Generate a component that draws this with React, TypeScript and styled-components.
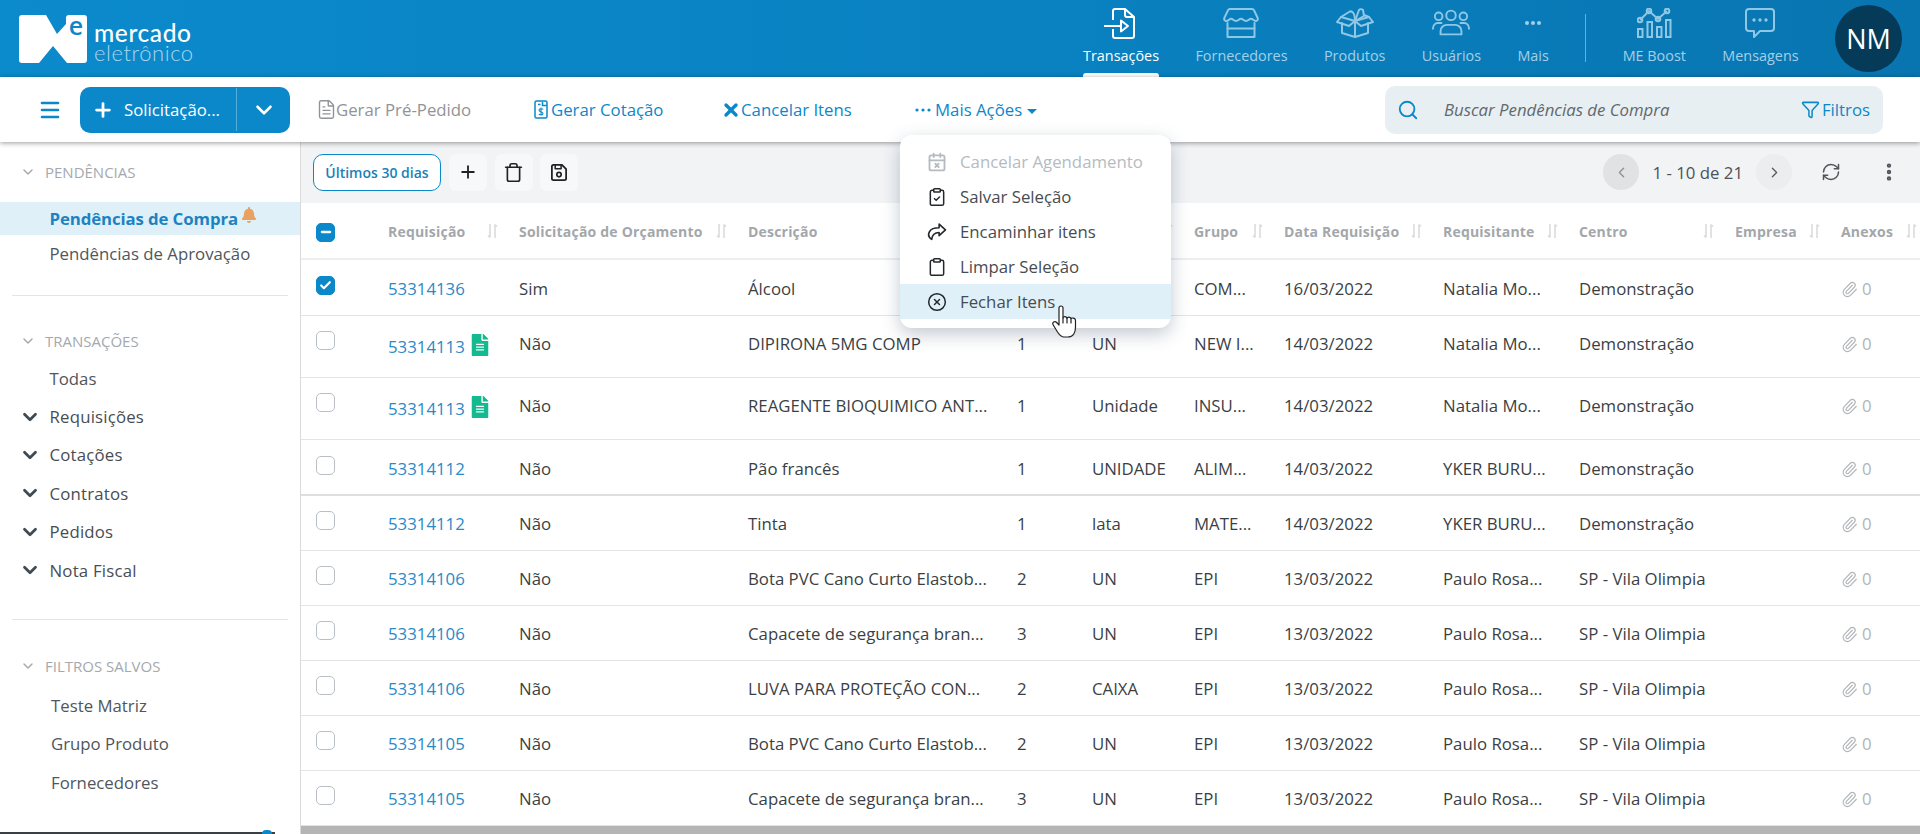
import React from "react";
import styled, { createGlobalStyle } from "styled-components";
import {
  Search, Funnel, Trash, Plus, RefreshCw, EllipsisVertical, ChevronDown, ChevronLeft, ChevronRight,
  Menu as MenuIcon, CalendarX, ClipboardCheck, Clipboard, CircleX, Paperclip, FileText, X, Check, Minus,
} from "lucide-react";
import { FaBell, FaFileAlt } from "react-icons/fa";

const BLUE = "#0b88c9";
const TEXT = "16.8px";

const Global = createGlobalStyle`
  html, body { margin: 0; padding: 0; height: 100%; overflow: hidden; background: #fff; }
  body { font-family: "Open Sans", "Noto Sans", sans-serif; font-size: ${TEXT}; color: #3c4247; }
  * { box-sizing: border-box; }
`;

const Page = styled.div`
  position: relative;
  width: 1920px;
  height: 834px;
  display: flex;
  flex-direction: column;
  overflow: hidden;
`;

const Header = styled.header`
  height: 77px;
  flex: none;
  display: flex;
  align-items: stretch;
  justify-content: space-between;
  padding: 0 18px 0 19px;
  background: linear-gradient(90deg, #0b8acc 0%, #0a82c2 50%, #0875b0 100%);
`;

const Logo = styled.div`
  display: flex;
  align-items: center;
  gap: 7px;
  svg { overflow: visible; }
`;

const LogoText = styled.div`
  display: flex;
  flex-direction: column;
  padding-top: 7px;
  font-family: "Lato", "Open Sans", sans-serif;
`;

const LogoTop = styled.span`
  font-size: 24.5px;
  line-height: 21px;
  font-weight: 500;
  letter-spacing: 0.6px;
  color: #fff;
`;

const LogoBottom = styled.span`
  font-size: 22px;
  line-height: 20px;
  font-weight: 300;
  letter-spacing: 0.55px;
  color: #a9d6ef;
`;

const Nav = styled.nav`
  display: flex;
  align-items: stretch;
  gap: 36.4px;
`;

const NavItem = styled.div<{ $active?: boolean }>`
  position: relative;
  display: flex;
  flex-direction: column;
  align-items: center;
  padding-top: 8px;
  font-size: 14.4px;
  line-height: 20px;
  font-weight: 500;
  color: ${(p) => (p.$active ? "#fff" : "#a2d0e9")};
  svg { display: block; }
`;

const NavIconBox = styled.div`
  height: 30px;
  margin-bottom: 8px;
  display: flex;
  align-items: center;
  justify-content: center;
`;

const NavMark = styled.span`
  position: absolute;
  left: 0;
  right: 0;
  bottom: 0;
  height: 4px;
  border-radius: 3px 3px 0 0;
  background: #fff;
`;

const NavDivider = styled.div`
  width: 1px;
  height: 48px;
  margin-top: 14px;
  background: rgba(255, 255, 255, 0.4);
`;

const Avatar = styled.div`
  width: 67px;
  height: 67px;
  margin-top: 5px;
  border-radius: 50%;
  background: #053b58;
  color: #fff;
  display: flex;
  align-items: center;
  justify-content: center;
  font-size: 27px;
`;

const Toolbar = styled.div`
  position: relative;
  z-index: 2;
  height: 65px;
  flex: none;
  display: flex;
  align-items: center;
  padding: 0 37px 0 40px;
  background: #fff;
  box-shadow: 0 1px 5px rgba(0, 0, 0, 0.4);
`;

const Burger = styled.div`
  width: 20px;
  margin-right: 20px;
  display: flex;
  color: ${BLUE};
  svg { margin: 0 -2px; }
`;

const SplitButton = styled.div`
  width: 210px;
  height: 46px;
  margin-right: 29px;
  border-radius: 10px;
  background: ${BLUE};
  color: #fff;
  display: flex;
  align-items: center;
  font-weight: 500;
`;

const SplitMain = styled.div`
  flex: 1;
  display: flex;
  align-items: center;
  gap: 10px;
  padding-left: 12px;
  height: 43px;
  border-right: 1px solid rgba(255, 255, 255, 0.3);
`;

const SplitCaret = styled.div`
  width: 53px;
  display: flex;
  justify-content: center;
`;

const Actions = styled.div`
  display: grid;
  grid-template-columns: 215px 191px 190px auto;
  align-items: center;
`;

const Action = styled.div<{ $disabled?: boolean; $gap?: number }>`
  display: flex;
  align-items: center;
  gap: ${(p) => p.$gap ?? 4}px;
  color: ${(p) => (p.$disabled ? "#8f9498" : BLUE)};
`;

const TrimIcon = styled.span<{ $trim: number }>`
  display: flex;
  margin: 0 ${(p) => -p.$trim}px;
`;

const CaretDown = styled.span`
  width: 0;
  height: 0;
  margin-left: 1px;
  margin-top: 3px;
  border-left: 5px solid transparent;
  border-right: 5px solid transparent;
  border-top: 5px solid ${BLUE};
`;

const SearchBox = styled.div`
  margin-left: auto;
  width: 498px;
  height: 48px;
  display: flex;
  align-items: center;
  padding: 0 13px 0 12px;
  border-radius: 10px;
  background: #e8eff3;
  color: ${BLUE};
`;

const SearchText = styled.span`
  flex: 1;
  margin-left: 25px;
  font-style: italic;
  color: #62686d;
`;

const Filters = styled.span`
  display: flex;
  align-items: center;
  gap: 2px;
`;

const Main = styled.main`
  flex: 1;
  min-height: 0;
  display: flex;
`;

const Sidebar = styled.aside`
  position: relative;
  width: 301px;
  flex: none;
  padding-top: 12px;
  border-right: 1px solid #d8dadc;
  background: #fff;
`;

const SectionHead = styled.div`
  height: 36px;
  display: flex;
  align-items: center;
  gap: 9px;
  padding-left: 20px;
  font-size: 15px;
  color: #a5a9ad;
`;

const SideGap = styled.div<{ $h: number }>`
  height: ${(p) => p.$h}px;
`;

const SideActive = styled.div`
  height: 33px;
  display: flex;
  align-items: center;
  padding-left: 49.5px;
  background: #e0f0f8;
  color: #1b83c1;
  font-weight: 700;
  letter-spacing: -0.1px;
`;

const BellMark = styled.span`
  display: flex;
  margin: -7px 0 0 3px;
  color: #e8a15f;
`;

const SideItem = styled.div<{ $h?: number; $x?: number; $strong?: boolean }>`
  height: ${(p) => p.$h ?? 38.4}px;
  display: flex;
  align-items: center;
  gap: 9px;
  padding-left: ${(p) => p.$x ?? 49.5}px;
  font-weight: ${(p) => (p.$strong ? 500 : 400)};
  letter-spacing: ${(p) => (p.$strong ? "0.2px" : "0")};
  color: ${(p) => (p.$strong ? "#474d52" : "#50565b")};
`;

const SideToggle = styled.span`
  display: flex;
  margin-left: -31px;
  width: 22px;
  color: #3f4a52;
`;

const SideDivider = styled.div`
  height: 1px;
  margin: 0 12px;
  background: #e3e5e7;
`;

const SideEdge = styled.div`
  position: absolute;
  left: 0;
  bottom: 0;
  width: 275px;
  height: 2px;
  background: #3a3f44;
  &::after {
    content: "";
    position: absolute;
    right: 3px;
    top: -2px;
    width: 10px;
    height: 4px;
    border-radius: 5px 5px 0 0;
    background: ${BLUE};
  }
`;

const Content = styled.section`
  flex: 1;
  min-width: 0;
  display: flex;
  flex-direction: column;
`;

const ContentBar = styled.div`
  height: 61px;
  flex: none;
  display: flex;
  align-items: center;
  padding: 0 20px 1px 12px;
  background: #f1f3f5;
`;

const PeriodChip = styled.div`
  width: 128px;
  height: 37px;
  margin-right: 8px;
  display: flex;
  align-items: center;
  justify-content: center;
  border: 1px solid ${BLUE};
  border-radius: 10px;
  background: #fff;
  color: #1b7fb9;
  font-size: 14px;
  font-weight: 600;
`;

const IconChip = styled.div`
  width: 38px;
  height: 37px;
  margin-right: 7.5px;
  display: flex;
  align-items: center;
  justify-content: center;
  border-radius: 6px;
  background: #f7f8f9;
  color: #1f2326;
`;

const Pager = styled.div`
  margin-left: auto;
  display: flex;
  align-items: center;
  color: #4c5257;
`;

const PageCircle = styled.div<{ $dim?: boolean }>`
  width: 36px;
  height: 36px;
  border-radius: 50%;
  display: flex;
  align-items: center;
  justify-content: center;
  background: ${(p) => (p.$dim ? "#e1e2e3" : "#ebedee")};
  color: ${(p) => (p.$dim ? "#8b8f93" : "#555a5f")};
`;

const PageText = styled.span`
  margin: 0 13px;
`;

const PagerIcon = styled.span<{ $gap: number }>`
  display: flex;
  margin-left: ${(p) => p.$gap}px;
  color: #50565b;
`;

const HeadRow = styled.div`
  height: 57px;
  flex: none;
  display: grid;
  grid-template-columns: 72px 131px 229px 269px 75px 102px 90px 159px 136px 156px 106px 79px;
  padding-left: 15px;
  align-items: center;
  background: #fff;
  border-bottom: 2px solid #eceef1;
`;

const HeadCheck = styled.div`
  margin-top: 3px;
`;

const HeadCell = styled.div<{ $end?: number }>`
  display: flex;
  align-items: center;
  justify-content: space-between;
  padding-right: ${(p) => p.$end ?? 21}px;
  padding-top: 1px;
  font-size: 14px;
  font-weight: 700;
  letter-spacing: 0.2px;
  color: #a3a7ab;
  white-space: nowrap;
`;

const BodyRow = styled.div<{ $h: number; $heavy?: boolean; $top?: number }>`
  height: ${(p) => p.$h}px;
  flex: none;
  display: grid;
  grid-template-columns: 72px 131px 229px 269px 75px 102px 90px 159px 136px 156px 106px 79px;
  align-items: start;
  padding-left: 15px;
  padding-top: ${(p) => p.$top ?? 18}px;
  background: #fff;
  border-bottom: ${(p) => (p.$heavy ? "2px solid #dcdee0" : "1.5px solid #e2e4e6")};
  line-height: 22px;
  color: #3a3f44;
`;

const Cell = styled.div`
  white-space: nowrap;
`;

const CheckCell = styled.div`
  margin-top: -2px;
`;

const LinkCell = styled.div<{ $drop?: boolean }>`
  display: flex;
  align-items: flex-start;
  gap: 4px;
  color: #2a8ac8;
  white-space: nowrap;
  padding-top: ${(p) => (p.$drop ? 3 : 0)}px;
`;

const FileMark = styled.span`
  display: flex;
  margin-top: -2px;
  color: #13b98f;
`;

const AttachCell = styled.div`
  display: flex;
  align-items: center;
  gap: 4px;
  color: #b1b5b9;
`;

const Box = styled.span<{ $on?: boolean }>`
  width: 19px;
  height: 19px;
  display: flex;
  align-items: center;
  justify-content: center;
  border-radius: 5px;
  border: 1.5px solid ${(p) => (p.$on ? BLUE : "#b9bfc5")};
  background: ${(p) => (p.$on ? BLUE : "#fff")};
  color: #fff;
`;

const Scrollbar = styled.div`
  flex: 1;
  background: #b5b5b5;
`;

const Dropdown = styled.div`
  position: absolute;
  left: 900px;
  top: 135px;
  z-index: 5;
  width: 271px;
  padding: 9px 0;
  border-radius: 12px;
  background: #fff;
  box-shadow: 0 6px 18px rgba(40, 60, 90, 0.28);
`;

const DropItem = styled.div<{ $disabled?: boolean; $hover?: boolean }>`
  height: 35px;
  display: flex;
  align-items: center;
  gap: 13px;
  padding-left: 27px;
  color: ${(p) => (p.$disabled ? "#b5bbc1" : "#474c51")};
  background: ${(p) => (p.$hover ? "#e0f0f8" : "transparent")};
  svg { flex: none; color: ${(p) => (p.$disabled ? "#b5bbc1" : "#24282b")}; }
`;

const Hand = styled.div`
  position: absolute;
  left: 1052px;
  top: 305px;
  z-index: 6;
  display: flex;
`;

const TransacoesIconShift = styled.span`
  display: flex;
  margin-left: -4px;
`;

const IconHand = () => (
  <svg width="26" height="33" viewBox="0 0 26 33" fill="#fff" stroke="#222" strokeWidth="1.200" strokeLinejoin="round" strokeLinecap="round">
    <path d="M7 3c0-2.700 4-2.700 4 0v10c0-2 4-2 4 .5 0-2 4-2 4 .5 0-1.500 4.500-1.500 4.500 1.500v6.500c0 5-2 10-7.500 10H12c-3 0-4.500-2-6.500-5L1.200 20c-1.500-2.500 1.500-4.500 3.500-2.500L7 20z" />
    <path d="M11 13v5M15 13.500V18M19 14.500V18" fill="none" />
  </svg>
);

const IconTransacoes = () => (
  <TransacoesIconShift>
    <svg width="32" height="32" viewBox="0 0 32 32" fill="none" stroke="#fff" strokeWidth="2" strokeLinejoin="round">
      <path d="M10 13V4a2 2 0 0 1 2-2h10l9 8v19a2 2 0 0 1-2 2H12a2 2 0 0 1-2-2v-7" />
      <path d="M22 2v6a2 2 0 0 0 2 2h7" />
      <path d="M1 19h17" />
      <path d="M18 13.500l7 5.500-7 5.500z" />
    </svg>
  </TransacoesIconShift>
);

const IconStore = () => (
  <svg width="36" height="30" viewBox="0 0 36 30" fill="none" stroke="#8fc7e4" strokeWidth="2" strokeLinejoin="round" strokeLinecap="round">
    <path d="M7 1h22c1 0 1.600.5 2 1.300l3.600 7.500c.8 1.800-.3 3.200-1.800 3.200" />
    <path d="M7 1C6 1 5.400 1.500 5 2.300L1.400 9.800C.6 11.600 1.700 13 3.200 13" />
    <path d="M3 13c3 0 3-2.300 5-2.300S10.500 13 13 13s3-2.300 5-2.300S20.500 13 23 13s3-2.300 5-2.300 2.500 2.300 5 2.300" />
    <path d="M4.500 15v14h27V15" />
    <path d="M4.500 20.500h27" />
  </svg>
);

const IconGift = () => (
  <svg width="38" height="30" viewBox="0 0 38 30" fill="none" stroke="#8fc7e4" strokeWidth="2" strokeLinejoin="round" strokeLinecap="round">
    <path d="M6 15v10l13 4 13-4V15" />
    <path d="M19 14v15" />
    <path d="M5 9L1 14l12 4 6-5 6 5 12-4-4-5-14 4z" />
    <path d="M5 9l8-5c3-2 6 1 6 9" />
    <path d="M33 9l-5-2" />
    <path d="M19 13l4-11c1-1 3-1 4 0l1 6z" />
  </svg>
);

const IconUsers = () => (
  <svg width="38" height="28" viewBox="0 0 40 28" fill="none" stroke="#8fc7e4" strokeWidth="2" strokeLinecap="round" strokeLinejoin="round">
    <circle cx="7" cy="7" r="4" />
    <circle cx="20" cy="6" r="5" />
    <circle cx="33" cy="7" r="4" />
    <path d="M9 26v-3.500a6.500 6.500 0 0 1 6.500-6.500h9a6.500 6.500 0 0 1 6.500 6.500V26z" />
    <path d="M1 20c0-3 2-6 5-6h4" />
    <path d="M39 20c0-3-2-6-5-6h-4" />
  </svg>
);

const IconDots = () => (
  <svg width="18" height="6" viewBox="0 0 18 6" fill="#a2d0e9">
    <circle cx="3" cy="3" r="2" />
    <circle cx="9" cy="3" r="2" />
    <circle cx="15" cy="3" r="2" />
  </svg>
);

const IconBoost = () => (
  <svg width="35" height="30" viewBox="0 0 35 30" fill="none" stroke="#8fc7e4" strokeWidth="2">
    <path d="M3 12l9-9 9 8 9-8" />
    <circle cx="3" cy="12" r="2.300" />
    <circle cx="12" cy="3" r="2.300" />
    <circle cx="21" cy="11" r="2.300" />
    <circle cx="30" cy="3" r="2.300" />
    <rect x="1" y="21" width="4.500" height="8" />
    <rect x="10.500" y="14" width="4.500" height="15" />
    <rect x="20" y="19" width="4.500" height="10" />
    <rect x="29" y="12" width="4.500" height="17" />
  </svg>
);

const IconMessage = () => (
  <svg width="30" height="30" viewBox="0 0 30 30" fill="none" stroke="#8fc7e4" strokeWidth="2" strokeLinejoin="round">
    <path d="M4 1h22a3 3 0 0 1 3 3v16a3 3 0 0 1-3 3H15l-6 6v-6H4a3 3 0 0 1-3-3V4a3 3 0 0 1 3-3z" />
    <g fill="#8fc7e4" stroke="none">
      <circle cx="9" cy="12" r="1.700" />
      <circle cx="15" cy="12" r="1.700" />
      <circle cx="21" cy="12" r="1.700" />
    </g>
  </svg>
);

const IconLogoMark = () => (
  <svg width="68" height="48" viewBox="0 0 68 48">
    <path
      fill="#fff"
      d="M3 0h24l11 19 9-10V3a3 3 0 0 1 3-3h15a3 3 0 0 1 3 3v42a3 3 0 0 1-3 3H48L34 31 20 48H3a3 3 0 0 1-3-3V3a3 3 0 0 1 3-3z"
    />
    <text x="57" y="19.500" textAnchor="middle" fontSize="25" fontWeight="600" fontFamily="Open Sans, sans-serif" fill="#0b88c9">
      e
    </text>
  </svg>
);

const IconCotacao = () => (
  <svg width="14" height="19" viewBox="0 0 14 19" fill="none" stroke={BLUE} strokeWidth="1.500">
    <rect x="1" y="1" width="12" height="17" rx="1.500" />
    <path d="M4 4.500h2.500M8.500 2v3.500H13" />
    <path d="M9 9.500C8.500 8.500 5 8.300 5 10.200s4 1.300 4 3.300-3.500 1.500-4 .5M7 7.500v8" strokeWidth="1.100" />
  </svg>
);

const IconSort = () => (
  <svg width="11" height="16" viewBox="0 0 11 16" fill="none" stroke="#d9dbdd" strokeWidth="1.600">
    <path d="M3 1v13.500M1 12.500l2 2" />
    <path d="M8 15V1.500M8 1.500l2 2" />
  </svg>
);

const IconShare = () => (
  <svg width="20" height="18" viewBox="0 0 18 17" fill="none" stroke="#24282b" strokeWidth="1.500" strokeLinejoin="round">
    <path d="M11 1l6 5.500-6 5.500V9C7 9 4.500 10.500 4 15.500 1 13.500.5 10.500 2 8c1.500-2.500 5-3.500 9-3.500z" />
  </svg>
);

const IconFloppy = () => (
  <svg width="16" height="17" viewBox="0 0 19 20" fill="none" stroke="currentColor" strokeWidth="2.200" strokeLinejoin="round">
    <path d="M3 1h10l5 5v11a2 2 0 0 1-2 2H3a2 2 0 0 1-2-2V3a2 2 0 0 1 2-2z" />
    <path d="M5 1v4.500h7V1" strokeWidth="1.800" />
    <circle cx="9.500" cy="12.500" r="2.600" strokeWidth="2" />
  </svg>
);

const navItems = [
  { label: "Transações", icon: <IconTransacoes />, active: true },
  { label: "Fornecedores", icon: <IconStore /> },
  { label: "Produtos", icon: <IconGift /> },
  { label: "Usuários", icon: <IconUsers /> },
  { label: "Mais", icon: <IconDots /> },
];

const heads = ["Requisição", "Solicitação de Orçamento", "Descrição", "Quantidade", "Unidade", "Grupo", "Data Requisição", "Requisitante", "Centro", "Empresa", "Anexos"];

type Row = {
  id: string; sol: string; desc: string; qty: string; unit: string; group: string; date: string; who: string; center: string;
  h: number; top?: number; file?: boolean; on?: boolean; heavy?: boolean;
};

const rows: Row[] = [
  { id: "53314136", sol: "Sim", desc: "Álcool", qty: "1", unit: "UN", group: "COM...", date: "16/03/2022", who: "Natalia Mo...", center: "Demonstração", h: 56, on: true },
  { id: "53314113", sol: "Não", desc: "DIPIRONA 5MG COMP", qty: "1", unit: "UN", group: "NEW I...", date: "14/03/2022", who: "Natalia Mo...", center: "Demonstração", h: 62, file: true, top: 17 },
  { id: "53314113", sol: "Não", desc: "REAGENTE BIOQUIMICO ANT...", qty: "1", unit: "Unidade", group: "INSU...", date: "14/03/2022", who: "Natalia Mo...", center: "Demonstração", h: 62, file: true, top: 17 },
  { id: "53314112", sol: "Não", desc: "Pão francês", qty: "1", unit: "UNIDADE", group: "ALIM...", date: "14/03/2022", who: "YKER BURU...", center: "Demonstração", h: 56, heavy: true },
  { id: "53314112", sol: "Não", desc: "Tinta", qty: "1", unit: "lata", group: "MATE...", date: "14/03/2022", who: "YKER BURU...", center: "Demonstração", h: 55, top: 17 },
  { id: "53314106", sol: "Não", desc: "Bota PVC Cano Curto Elastob...", qty: "2", unit: "UN", group: "EPI", date: "13/03/2022", who: "Paulo Rosa...", center: "SP - Vila Olimpia", h: 55, top: 17 },
  { id: "53314106", sol: "Não", desc: "Capacete de segurança bran...", qty: "3", unit: "UN", group: "EPI", date: "13/03/2022", who: "Paulo Rosa...", center: "SP - Vila Olimpia", h: 55, top: 17 },
  { id: "53314106", sol: "Não", desc: "LUVA PARA PROTEÇÃO CON...", qty: "2", unit: "CAIXA", group: "EPI", date: "13/03/2022", who: "Paulo Rosa...", center: "SP - Vila Olimpia", h: 55, top: 17 },
  { id: "53314105", sol: "Não", desc: "Bota PVC Cano Curto Elastob...", qty: "2", unit: "UN", group: "EPI", date: "13/03/2022", who: "Paulo Rosa...", center: "SP - Vila Olimpia", h: 55, top: 17 },
  { id: "53314105", sol: "Não", desc: "Capacete de segurança bran...", qty: "3", unit: "UN", group: "EPI", date: "13/03/2022", who: "Paulo Rosa...", center: "SP - Vila Olimpia", h: 55, top: 17 },
];

export default function App() {
  return (
    <Page>
      <Global />
      <Header>
        <Logo>
          <IconLogoMark />
          <LogoText>
            <LogoTop>mercado</LogoTop>
            <LogoBottom>eletrônico</LogoBottom>
          </LogoText>
        </Logo>
        <Nav>
          {navItems.map((n) => (
            <NavItem key={n.label} $active={n.active}>
              <NavIconBox>{n.icon}</NavIconBox>
              {n.label}
              {n.active && <NavMark />}
            </NavItem>
          ))}
          <NavDivider />
          <NavItem>
            <NavIconBox><IconBoost /></NavIconBox>
            ME Boost
          </NavItem>
          <NavItem>
            <NavIconBox><IconMessage /></NavIconBox>
            Mensagens
          </NavItem>
          <Avatar>NM</Avatar>
        </Nav>
      </Header>

      <Toolbar>
        <Burger><MenuIcon size={24} strokeWidth={2.6} /></Burger>
        <SplitButton>
          <SplitMain>
            <Plus size={22} strokeWidth={3} />
            Solicitação...
          </SplitMain>
          <SplitCaret><ChevronDown size={26} strokeWidth={2.4} /></SplitCaret>
        </SplitButton>
        <Actions>
          <Action $disabled $gap={3}><TrimIcon $trim={3.5}><FileText size={21} strokeWidth={1.6} /></TrimIcon>Gerar Pré-Pedido</Action>
          <Action $gap={3}><IconCotacao />Gerar Cotação</Action>
          <Action><TrimIcon $trim={4}><X size={20} strokeWidth={4} /></TrimIcon>Cancelar Itens</Action>
          <Action>
            <svg width="16" height="4" viewBox="0 0 16 4" fill={BLUE}>
              <circle cx="2" cy="2" r="1.600" /><circle cx="8" cy="2" r="1.600" /><circle cx="14" cy="2" r="1.600" />
            </svg>
            Mais Ações
            <CaretDown />
          </Action>
        </Actions>
        <SearchBox>
          <Search size={22} strokeWidth={2} />
          <SearchText>Buscar Pendências de Compra</SearchText>
          <Filters><Funnel size={19} strokeWidth={1.9} />Filtros</Filters>
        </SearchBox>
      </Toolbar>

      <Main>
        <Sidebar>
          <SectionHead><ChevronDown size={16} strokeWidth={2.2} />PENDÊNCIAS</SectionHead>
          <SideGap $h={12} />
          <SideActive>
            Pendências de Compra
            <BellMark><FaBell size={16} /></BellMark>
          </SideActive>
          <SideItem $h={36}>Pendências de Aprovação</SideItem>
          <SideGap $h={24} />
          <SideDivider />
          <SideGap $h={27} />
          <SectionHead><ChevronDown size={16} strokeWidth={2.2} />TRANSAÇÕES</SectionHead>
          <SideItem>Todas</SideItem>
          {["Requisições", "Cotações", "Contratos", "Pedidos", "Nota Fiscal"].map((t) => (
            <SideItem key={t} $strong>
              <SideToggle><ChevronDown size={22} strokeWidth={3} /></SideToggle>
              {t}
            </SideItem>
          ))}
          <SideGap $h={30} />
          <SideDivider />
          <SideGap $h={28} />
          <SectionHead><ChevronDown size={16} strokeWidth={2.2} />FILTROS SALVOS</SectionHead>
          <SideGap $h={2} />
          {["Teste Matriz", "Grupo Produto", "Fornecedores"].map((t) => (
            <SideItem key={t} $x={51}>{t}</SideItem>
          ))}
          <SideEdge />
        </Sidebar>

        <Content>
          <ContentBar>
            <PeriodChip>Últimos 30 dias</PeriodChip>
            <IconChip><Plus size={20} strokeWidth={2.2} /></IconChip>
            <IconChip><Trash size={21} strokeWidth={1.9} /></IconChip>
            <IconChip><IconFloppy /></IconChip>
            <Pager>
              <PageCircle $dim><ChevronLeft size={17} strokeWidth={1.8} /></PageCircle>
              <PageText>1 - 10 de 21</PageText>
              <PageCircle><ChevronRight size={17} strokeWidth={1.8} /></PageCircle>
              <PagerIcon $gap={29}><RefreshCw size={20} strokeWidth={1.8} /></PagerIcon>
              <PagerIcon $gap={37}><EllipsisVertical size={22} strokeWidth={2.8} /></PagerIcon>
            </Pager>
          </ContentBar>

          <HeadRow>
            <HeadCheck><Box $on><Minus size={14} strokeWidth={4} /></Box></HeadCheck>
            {heads.map((h) => (
              <HeadCell key={h} $end={h === "Anexos" ? 3 : 21}>
                {h}
                <IconSort />
              </HeadCell>
            ))}
          </HeadRow>

          {rows.map((r, i) => (
            <BodyRow key={i} $h={r.h} $top={r.top} $heavy={r.heavy}>
              <CheckCell><Box $on={r.on}>{r.on && <Check size={13} strokeWidth={4} />}</Box></CheckCell>
              <LinkCell $drop={r.file}>
                {r.id}
                {r.file && <FileMark><FaFileAlt size={22} /></FileMark>}
              </LinkCell>
              <Cell>{r.sol}</Cell>
              <Cell>{r.desc}</Cell>
              <Cell>{r.qty}</Cell>
              <Cell>{r.unit}</Cell>
              <Cell>{r.group}</Cell>
              <Cell>{r.date}</Cell>
              <Cell>{r.who}</Cell>
              <Cell>{r.center}</Cell>
              <Cell />
              <AttachCell><Paperclip size={17} strokeWidth={1.6} />0</AttachCell>
            </BodyRow>
          ))}
          <Scrollbar />
        </Content>
      </Main>

      <Dropdown>
        <DropItem $disabled><CalendarX size={20} strokeWidth={2.2} />Cancelar Agendamento</DropItem>
        <DropItem><ClipboardCheck size={20} strokeWidth={1.8} />Salvar Seleção</DropItem>
        <DropItem><IconShare />Encaminhar itens</DropItem>
        <DropItem><Clipboard size={20} strokeWidth={1.8} />Limpar Seleção</DropItem>
        <DropItem $hover><CircleX size={20} strokeWidth={1.8} />Fechar Itens</DropItem>
      </Dropdown>
      <Hand><IconHand /></Hand>
    </Page>
  );
}
